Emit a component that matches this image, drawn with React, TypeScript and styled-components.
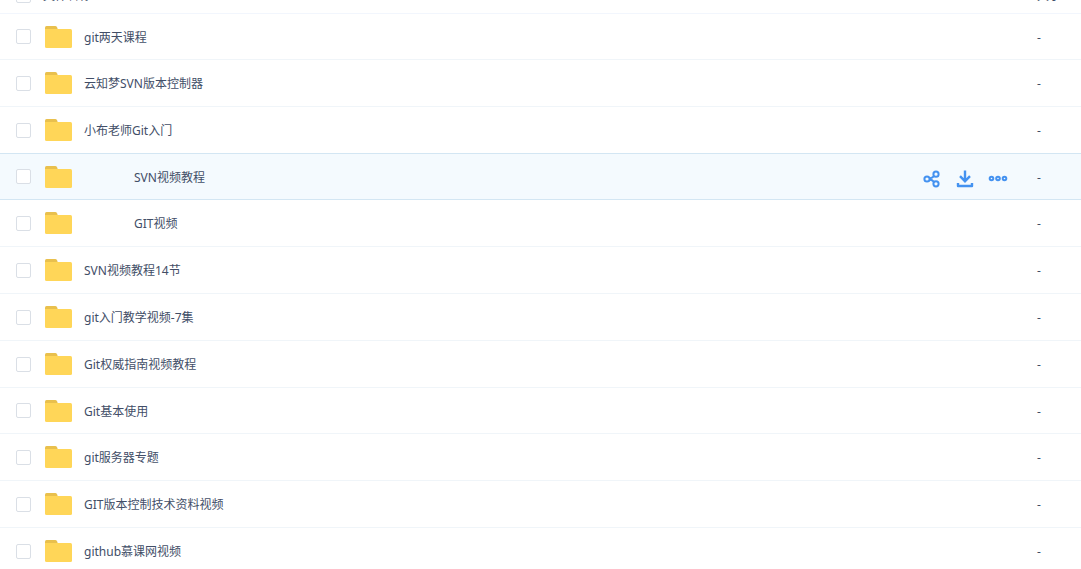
import React from 'react';
import styled, { createGlobalStyle } from 'styled-components';

const GlobalStyle = createGlobalStyle`
  * { box-sizing: border-box; }
  body {
    margin: 0;
    background: #fff;
    color: #424e67;
    font: 12px/18px "Noto Sans", "Noto Sans CJK SC", sans-serif;
    overflow: hidden;
  }
`;

const Clip = styled.main`
  width: 100%;
  height: 100vh;
  overflow: hidden;
`;

const List = styled.ul`
  list-style: none;
  margin: 0;
  padding: 0;
`;

const Header = styled.header`
  display: flex;
  align-items: flex-end;
  height: 47px;
  margin-top: -33px;
  padding: 0 16px 8px;
  border-bottom: 1px solid #f2f6fd;
`;

const Row = styled.li<{ $active?: boolean }>`
  display: flex;
  align-items: center;
  height: 47px;
  padding: 0 16px;
  background: ${(p) => (p.$active ? '#f4fafe' : '#fff')};
  border-bottom: 1px solid ${(p) => (p.$active ? '#d3e6f3' : '#f0f5f9')};
  &:has(+ li[data-active]) { border-bottom-color: #d3e6f3; }
  &:first-child, &:nth-child(5n + 4) { height: 46px; }
`;

const Check = styled.input`
  appearance: none;
  flex: none;
  width: 15px;
  height: 15px;
  margin: 0;
  border: 1px solid #dadfe6;
  border-radius: 2px;
  background: #fff;
`;

const HeaderCheck = styled(Check)`
  margin-bottom: 2px;
`;

const Name = styled.label<{ $indent?: boolean }>`
  flex: 1;
  padding-top: 2px;
  padding-left: ${(p) => (p.$indent ? 62 : 12)}px;
  white-space: nowrap;
`;

const HeaderName = styled.span`
  flex: 1;
  padding-left: 12px;
`;

const Size = styled.span`
  width: 28px;
  padding-top: 2px;
`;

const Actions = styled.div`
  display: flex;
  gap: 13px;
  margin-right: 29px;
  padding-top: 4px;
`;

const Action = styled.button`
  display: flex;
  width: 20px;
  height: 20px;
  padding: 0;
  border: 0;
  background: none;
  color: #4492f0;
`;

const FolderSvg = styled.svg`
  flex: none;
  margin-left: 13px;
`;

const Folder = () => (
  <FolderSvg width="28" height="24" viewBox="0 0 28 24" aria-hidden="true">
    <path d="M2.5 1H11.2Q12.5 1 13 2.2L14.5 6H1V2.5Q1 1 2.5 1Z" fill="#e9c04d" />
    <path d="M1 4H26.5Q28 4 28 5.5V21.5Q28 23 26.5 23H2.5Q1 23 1 21.5Z" fill="#ffd658" />
  </FolderSvg>
);

const ShareIcon = () => (
  <svg width="20" height="20" viewBox="0 0 20 20" fill="none" stroke="currentColor" strokeWidth="2">
    <circle cx="5" cy="10" r="2.6" />
    <circle cx="14" cy="5.2" r="2.6" />
    <circle cx="14" cy="14.8" r="2.6" />
    <path d="M7.4 9.4Q10.4 9 12 7.2M7.4 10.6Q10.4 11 12 12.8" />
  </svg>
);

const DownloadIcon = () => (
  <svg width="20" height="20" viewBox="0 0 20 20" fill="none" stroke="currentColor" strokeWidth="2.4">
    <path d="M10 1.5V12M5 7.2L10 12.2L15 7.2" />
    <path d="M3 14V17H17V14" strokeLinejoin="round" />
  </svg>
);

const MoreIcon = () => (
  <svg width="20" height="20" viewBox="0 0 20 20" fill="none" stroke="currentColor" strokeWidth="2">
    <circle cx="3.5" cy="9.5" r="1.8" />
    <circle cx="10" cy="9.5" r="1.8" />
    <circle cx="16.5" cy="9.5" r="1.8" />
  </svg>
);

type Item = { name: string; indent?: boolean; active?: boolean };

const items: Item[] = [
  { name: 'git两天课程' },
  { name: '云知梦SVN版本控制器' },
  { name: '小布老师Git入门' },
  { name: 'SVN视频教程', indent: true, active: true },
  { name: 'GIT视频', indent: true },
  { name: 'SVN视频教程14节' },
  { name: 'git入门教学视频-7集' },
  { name: 'Git权威指南视频教程' },
  { name: 'Git基本使用' },
  { name: 'git服务器专题' },
  { name: 'GIT版本控制技术资料视频' },
  { name: 'github慕课网视频' },
];

export default function App() {
  return (
    <Clip>
      <GlobalStyle />
      <Header>
        <HeaderCheck type="checkbox" aria-label="全选" />
        <HeaderName>文件名称</HeaderName>
        <Size>大小</Size>
      </Header>
      <List>
        {items.map((item, i) => (
          <Row key={item.name} $active={item.active} data-active={item.active}>
            <Check type="checkbox" id={`file-${i}`} />
            <Folder />
            <Name htmlFor={`file-${i}`} $indent={item.indent}>{item.name}</Name>
            {item.active && (
              <Actions>
                <Action aria-label="分享"><ShareIcon /></Action>
                <Action aria-label="下载"><DownloadIcon /></Action>
                <Action aria-label="更多"><MoreIcon /></Action>
              </Actions>
            )}
            <Size>-</Size>
          </Row>
        ))}
      </List>
    </Clip>
  );
}
